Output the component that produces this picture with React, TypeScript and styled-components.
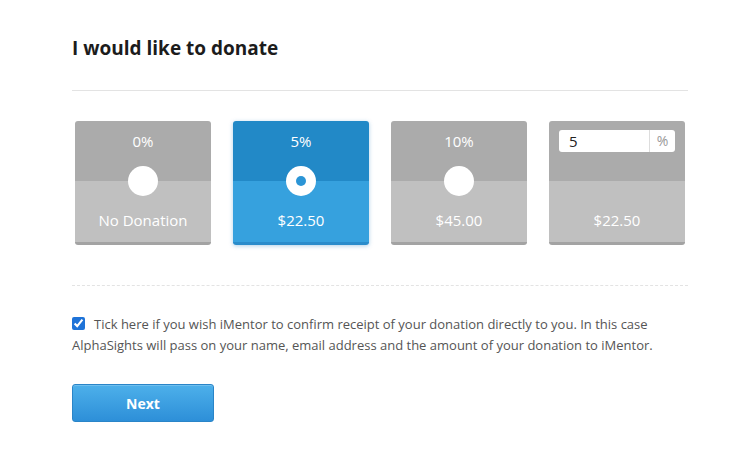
import React, { useState } from "react";
import styled, { createGlobalStyle, css } from "styled-components";

const Global = createGlobalStyle`
  html, body { margin: 0; padding: 0; background: #fff; }
  body { font-family: "Open Sans", "Lato", sans-serif; color: #333; }
`;

const Page = styled.div`
  width: 616px;
  padding: 36px 0 0 72px;
`;

const Title = styled.h1`
  margin: 0;
  font-size: 19px;
  line-height: 24px;
  font-weight: 700;
  color: #1c1c1c;
`;

const Rule = styled.hr<{ $dashed?: boolean }>`
  margin: 0;
  border: 0;
  border-top: 1px ${(p) => (p.$dashed ? "dashed" : "solid")} #e3e3e3;
`;

const TopRule = styled(Rule)`
  margin-top: 30px;
`;

const Options = styled.div`
  display: flex;
  gap: 22px;
  padding: 30px 3px 0 3px;
  margin-bottom: 40px;
`;

const Card = styled.div<{ $active?: boolean }>`
  position: relative;
  width: 136px;
  height: 124px;
  border-radius: 3px;
  display: flex;
  flex-direction: column;
  color: #fff;
  font-size: 15px;
  cursor: pointer;
  ${(p) =>
    p.$active &&
    css`
      box-shadow: 0 1px 4px rgba(30, 120, 190, 0.35);
    `}
`;

const CardTop = styled.div<{ $active?: boolean }>`
  height: 60px;
  border-radius: 3px 3px 0 0;
  background: ${(p) => (p.$active ? "#2289c7" : "#ababab")};
  display: flex;
  justify-content: center;
  padding-top: 10px;
  box-sizing: border-box;
  line-height: 20px;
`;

const CardBottom = styled.div<{ $active?: boolean }>`
  flex: 1;
  border-radius: 0 0 3px 3px;
  background: ${(p) => (p.$active ? "#36a1de" : "#c0c0c0")};
  border-bottom: 3px solid ${(p) => (p.$active ? "#2a8ccb" : "#a3a3a3")};
  display: flex;
  justify-content: center;
  align-items: flex-end;
  padding-bottom: 12px;
  line-height: 20px;
`;

const Radio = styled.span<{ $active?: boolean }>`
  position: absolute;
  left: 53px;
  top: 45px;
  width: 30px;
  height: 30px;
  border-radius: 50%;
  background: #fff;
  display: flex;
  align-items: center;
  justify-content: center;
  &::after {
    content: "";
    width: 10px;
    height: 10px;
    border-radius: 50%;
    background: ${(p) => (p.$active ? "#2b95d6" : "transparent")};
  }
`;

const CustomTop = styled(CardTop)`
  padding: 9px 10px 0 10px;
`;

const PercentInput = styled.div`
  flex: 1;
  height: 22px;
  background: #fff;
  border-radius: 3px;
  display: flex;
  align-items: center;
`;

const InputField = styled.input`
  flex: 1;
  width: 0;
  min-width: 0;
  border: 0;
  outline: none;
  background: transparent;
  font-family: "Open Sans", sans-serif;
  font-size: 15px;
  color: #222;
  padding: 0 0 0 10px;
  height: 22px;
`;

const Suffix = styled.span`
  border-left: 1px solid #ddd;
  height: 22px;
  width: 25px;
  display: flex;
  align-items: center;
  justify-content: center;
  color: #999;
  font-size: 14px;
`;

const Consent = styled.label`
  display: block;
  padding-top: 28px;
  font-size: 13px;
  line-height: 21px;
  color: #555;
`;

const Check = styled.input`
  width: 13px;
  height: 13px;
  margin: 0 9px 0 0;
  vertical-align: -1px;
  accent-color: #1e73d8;
`;

const NextButton = styled.button`
  display: block;
  margin-top: 28px;
  width: 142px;
  height: 38px;
  border: 1px solid #2a85c8;
  border-radius: 3px;
  background: linear-gradient(#4db0ea, #2d8fd8);
  color: #fff;
  font-family: "Open Sans", sans-serif;
  font-weight: 700;
  font-size: 14px;
  cursor: pointer;
  box-shadow: inset 0 1px 0 rgba(255, 255, 255, 0.2);
`;

const options = [
  { pct: "0%", amount: "No Donation" },
  { pct: "5%", amount: "$22.50" },
  { pct: "10%", amount: "$45.00" },
];

export default function App() {
  const [selected, setSelected] = useState(1);
  const [custom, setCustom] = useState("5");
  const [checked, setChecked] = useState(true);
  return (
    <Page>
      <Global />
      <Title>I would like to donate</Title>
      <TopRule />
      <Options>
        {options.map((o, i) => {
          const active = selected === i;
          return (
            <Card key={o.pct} $active={active} onClick={() => setSelected(i)}>
              <CardTop $active={active}>{o.pct}</CardTop>
              <CardBottom $active={active}>{o.amount}</CardBottom>
              <Radio $active={active} />
            </Card>
          );
        })}
        <Card>
          <CustomTop>
            <PercentInput>
              <InputField value={custom} onChange={(e) => setCustom(e.target.value)} />
              <Suffix>%</Suffix>
            </PercentInput>
          </CustomTop>
          <CardBottom>$22.50</CardBottom>
        </Card>
      </Options>
      <Rule $dashed />
      <Consent>
        <Check type="checkbox" checked={checked} onChange={(e) => setChecked(e.target.checked)} />
        Tick here if you wish iMentor to confirm receipt of your donation directly to you. In this case
        AlphaSights will pass on your name, email address and the amount of your donation to iMentor.
      </Consent>
      <NextButton>Next</NextButton>
    </Page>
  );
}
